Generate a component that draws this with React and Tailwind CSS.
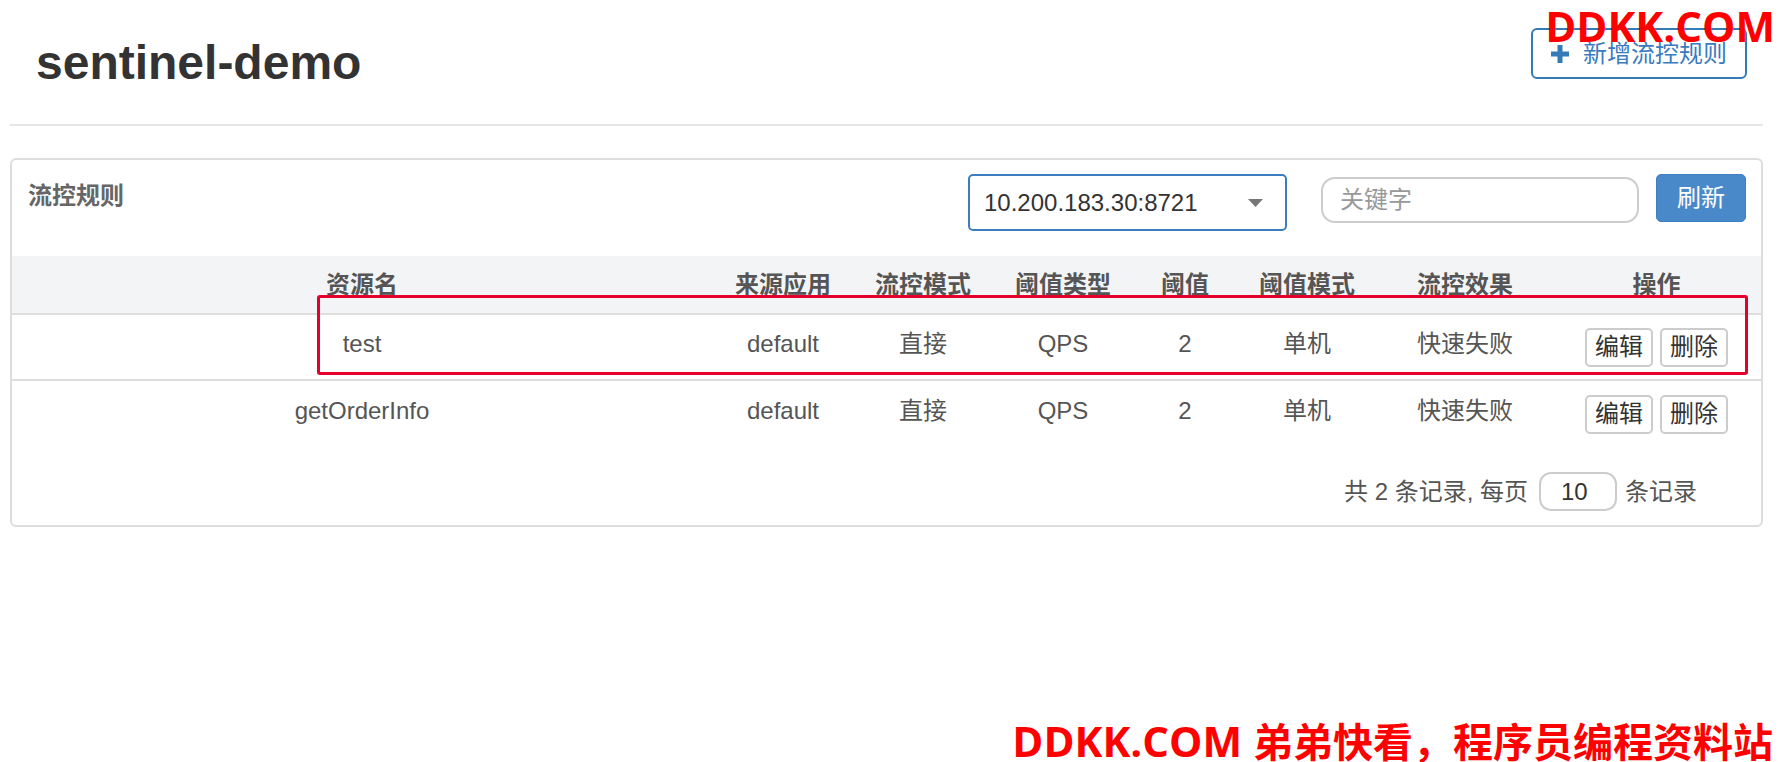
import { useState } from 'react';

const rules = [
  { resource: 'test', limitApp: 'default', strategy: '直接', grade: 'QPS', count: 2, clusterMode: '单机', behavior: '快速失败' },
  { resource: 'getOrderInfo', limitApp: 'default', strategy: '直接', grade: 'QPS', count: 2, clusterMode: '单机', behavior: '快速失败' },
];

const columns = ['资源名', '来源应用', '流控模式', '阈值类型', '阈值', '阈值模式', '流控效果', '操作'];

const gridCols = 'grid grid-cols-[700px_142px_138px_142px_102px_142px_174px_1fr]';

function PlusIcon() {
  return (
    <svg width="20" height="20" viewBox="0 0 20 20" className="shrink-0">
      <rect x="7.5" y="1" width="5" height="18" fill="#337ab7" />
      <rect x="1" y="7.5" width="18" height="5" fill="#337ab7" />
    </svg>
  );
}

function RowButton({ children }) {
  return (
    <button className="h-[39px] px-[8px] border-2 border-[#ccc] rounded-[5px] bg-white text-[24px] leading-none text-[#333]">
      {children}
    </button>
  );
}

function Cell({ children }) {
  return <div className="text-center pb-[6px]">{children}</div>;
}

export default function App() {
  const [keyword, setKeyword] = useState('');

  return (
    <div className="relative w-full min-h-[762px] bg-white overflow-hidden font-['Liberation_Sans','Noto_Sans_CJK_SC',sans-serif]">
      <div className="pl-[10px] pr-[17px]">
        {/* page header */}
        <div className="flex justify-between items-start">
          <h1 className="pl-[26px] pt-[39px] text-[48px] font-bold leading-none text-[#333]">sentinel-demo</h1>
          <button className="mt-[28px] mr-[16px] w-[216px] h-[51px] flex items-center gap-[13px] pl-[17px] border-2 border-[#337ab7] rounded-[6px] text-[24px] leading-none text-[#3a7bbf]">
            <PlusIcon />
            新增流控规则
          </button>
        </div>
        <div className="mt-[37px] h-[2px] bg-[#e6e6e6]" />

        {/* rules panel */}
        <div className="mt-[32px] border-2 border-[#ddd] rounded-[6px]">
          <div className="flex items-start pt-[14px] pl-[16px] pr-[15px]">
            <span className="mt-[10px] text-[24px] font-bold leading-none text-[#666]">流控规则</span>
            <div className="ml-auto flex items-start">
              <div className="w-[319px] h-[57px] flex items-center justify-between pl-[14px] pr-[22px] border-2 border-[#3c7dc0] rounded-[5px] text-[24px] text-[#333]">
                <span>10.200.183.30:8721</span>
                <svg width="15" height="8" viewBox="0 0 15 8">
                  <path d="M0 0 L15 0 L7.5 8 Z" fill="#777" />
                </svg>
              </div>
              <input
                value={keyword}
                onChange={(e) => setKeyword(e.target.value)}
                placeholder="关键字"
                className="ml-[34px] mt-[3px] w-[318px] h-[46px] pl-[17px] border-2 border-[#ccc] rounded-[14px] text-[24px] text-[#333] placeholder:text-[#999] outline-none"
              />
              <button className="ml-[17px] w-[90px] h-[48px] bg-[#4a89c9] border border-[#3f7fc0] rounded-[5px] text-white text-[24px] leading-none">
                刷新
              </button>
            </div>
          </div>

          <div className="mt-[25px]">
            <div className={`${gridCols} h-[59px] items-center bg-[#f3f4f6] border-b-2 border-[#ddd]`}>
              {columns.map((c) => (
                <div key={c} className="text-center text-[24px] font-bold leading-none text-[#555]">{c}</div>
              ))}
            </div>
            {rules.map((r, i) => (
              <div
                key={r.resource}
                className={`${gridCols} h-[66px] items-center text-[24px] leading-none text-[#555] ${i === 0 ? 'border-b-2 border-[#ddd]' : ''}`}
              >
                <Cell>{r.resource}</Cell>
                <Cell>{r.limitApp}</Cell>
                <Cell>{r.strategy}</Cell>
                <Cell>{r.grade}</Cell>
                <Cell>{r.count}</Cell>
                <Cell>{r.clusterMode}</Cell>
                <Cell>{r.behavior}</Cell>
                <div className="flex justify-center gap-[7px]">
                  <RowButton>编辑</RowButton>
                  <RowButton>删除</RowButton>
                </div>
              </div>
            ))}
          </div>

          {/* pagination */}
          <div className="mt-[25px] mb-[14px] flex justify-end items-center pr-[64px] text-[24px] text-[#555]">
            <span>共 2 条记录, 每页</span>
            <div className="ml-[11px] mr-[8px] w-[78px] h-[39px] flex items-center pl-[20px] border-2 border-[#ccc] rounded-[12px] text-[#333]">
              10
            </div>
            <span>条记录</span>
          </div>
        </div>
      </div>

      {/* screenshot annotation */}
      <div className="absolute left-[317px] top-[295px] w-[1431px] h-[80px] border-[3px] border-[#e4002b] rounded-[3px]" />

      {/* watermarks */}
      <div className="absolute right-[5px] top-[5px] text-[42px] font-bold leading-none text-[#ff0000] font-['Open_Sans','Noto_Sans_CJK_SC',sans-serif]">
        DDKK.COM
      </div>
      <div className="absolute right-[7px] top-[720px] text-[42px] font-bold leading-none text-[#ff0000] whitespace-nowrap font-['Open_Sans','Noto_Sans_CJK_SC',sans-serif]">
        DDKK.COM <span className="text-[40px] font-['Noto_Sans_CJK_SC',sans-serif]">弟弟快看，程序员编程资料站</span>
      </div>
    </div>
  );
}
